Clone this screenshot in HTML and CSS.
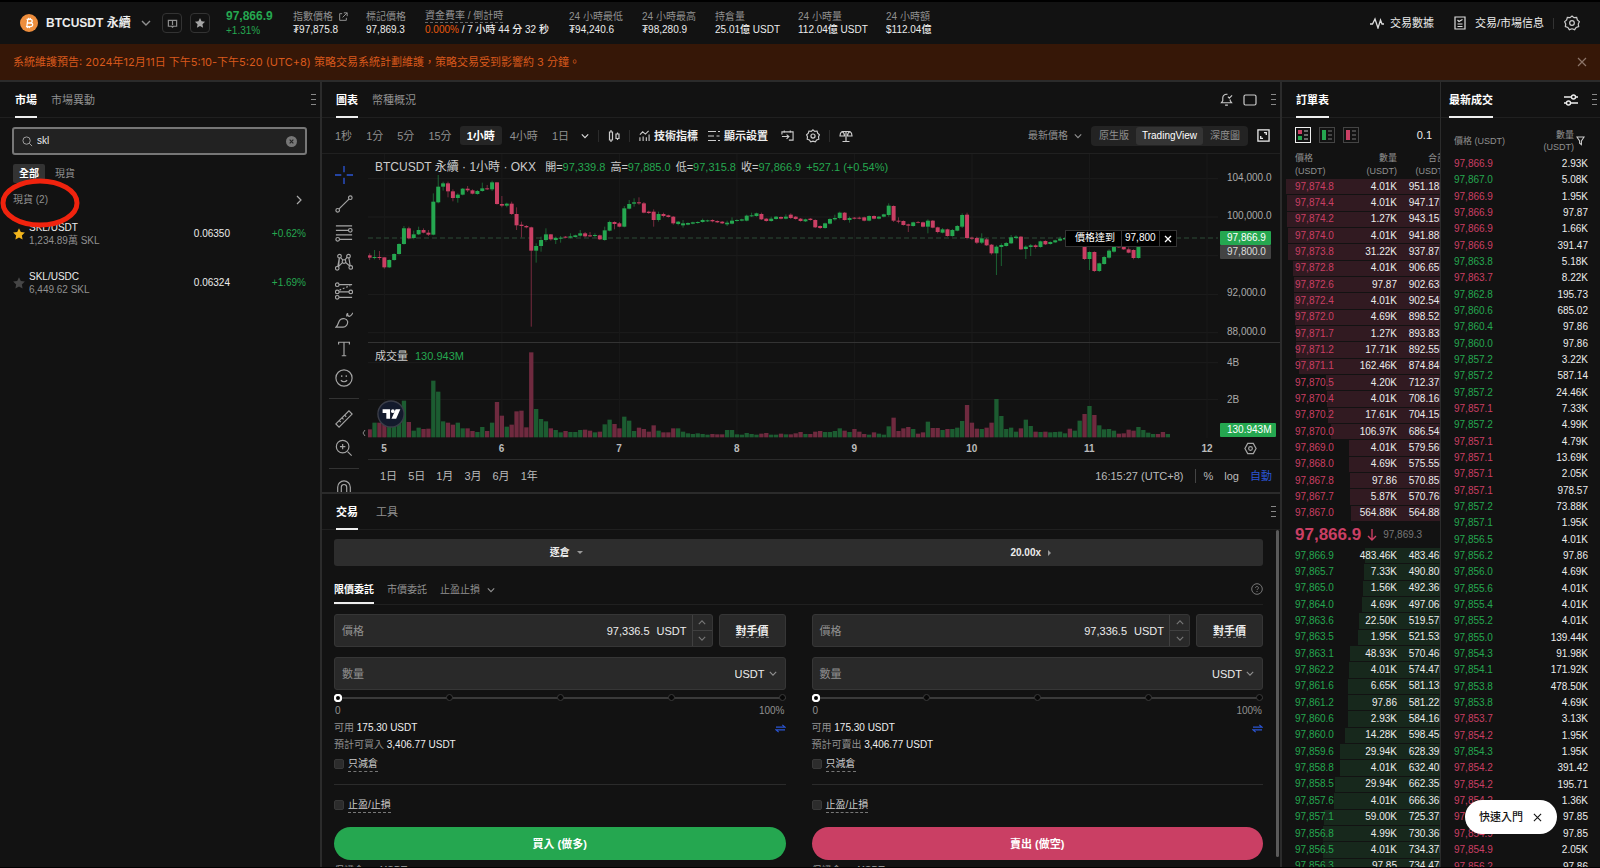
FILE: index.html
```html
<!DOCTYPE html>
<html lang="zh-Hant">
<head>
<meta charset="utf-8">
<title>BTCUSDT 永續</title>
<link rel="stylesheet" href="styles.css">
</head>
<body>
<header class="topbar">
  <div class="pair">
    <svg class="coin" viewBox="0 0 20 20" width="18" height="18"><circle cx="10" cy="10" r="10" fill="#ee8e3d"/><path d="M7.3 6h4c3 0 3 3.8 0 3.8H8.6M8.2 10h3.6c3.2 0 3 4-.2 4H6.6M8.6 6l-1 8M9.6 4.4L9.3 6M11.6 4.4L11.3 6M8.6 14l-.3 1.6M10.6 14l-.3 1.6" fill="none" stroke="#fff" stroke-width="1.4"/></svg>
    <h1 class="pair-name">BTCUSDT 永續</h1>
    <svg class="chev" viewBox="0 0 10 6" width="10" height="6"><path d="M1 1l4 4 4-4"/></svg>
  </div>
  <button class="sq-btn" aria-label="資訊"><svg viewBox="0 0 12 12" width="11" height="11"><path d="M1.500 2.500h9v6.500H7L6 10 5 9H1.500zM6 3v5" fill="none" stroke="#909090" stroke-width="1.300"/></svg></button>
  <button class="sq-btn sq-btn-star" aria-label="收藏"><svg viewBox="0 0 24 24" width="12" height="12"><path fill="#a6a6a6" d="M12 2l3.100 6.600 7 .9-5.200 4.900 1.300 7.100L12 18l-6.200 3.500 1.300-7.100L1.900 9.500l7-.9z"/></svg></button>
  <dl class="stats">
    <div class="stat stat-price"><dt class="up big">97,866.9</dt><dd class="up">+1.31%</dd></div>
    <div class="stat stat-index"><dt>指數價格 <svg viewBox="0 0 12 12" width="10" height="10"><path d="M5 2H2v8h8V7M7 1h4v4M11 1L5.500 6.500" fill="none" stroke="#909090" stroke-width="1.200"/></svg></dt><dd>₮97,875.8</dd></div>
    <div class="stat stat-mark"><dt>標記價格</dt><dd>97,869.3</dd></div>
    <div class="stat stat-fund"><dt><span class="dash">資金費率 / 倒計時</span></dt><dd><span class="orange">0.000%</span> / 7 小時 44 分 32 秒</dd></div>
    <div class="stat stat-day"><dt>24 小時最低</dt><dd>₮94,240.6</dd></div>
    <div class="stat stat-day"><dt>24 小時最高</dt><dd>₮98,280.9</dd></div>
    <div class="stat stat-oi"><dt>持倉量</dt><dd>25.01億 USDT</dd></div>
    <div class="stat stat-vol"><dt>24 小時量</dt><dd>112.04億 USDT</dd></div>
    <div class="stat"><dt>24 小時額</dt><dd>$112.04億</dd></div>
  </dl>
  <nav class="topnav">
    <a href="#data"><svg viewBox="0 0 14 12" width="14" height="12"><path d="M0 7h2.500L5 2l3 9 2.500-8L12 7h2" fill="none" stroke="#ddd" stroke-width="1.300"/></svg>交易數據</a>
    <a href="#info"><svg viewBox="0 0 12 14" width="12" height="14"><path d="M1 1h10v12H1zM3.500 4L5 5.500 8.500 3.500M3.500 8h5M3.500 10.500h5" fill="none" stroke="#ddd" stroke-width="1.200"/></svg>交易/市場信息</a>
    <i class="nav-sep"></i>
    <button class="icon-btn gear-main" aria-label="設置"><svg viewBox="0 0 24 24" width="16" height="16"><path class="ln" d="M12 1.500l3 2.500 4-.5 1 3.800 3 2.700-1.600 3.500.6 4-3.800 1.200L16 22l-4-1.300L8 22l-2.200-3.300L2 17.500l.6-4L1 10l3-2.700 1-3.800 4 .5z"/><circle class="ln" cx="12" cy="12" r="3.500"/></svg></button>
  </nav>
</header>

<div class="notice" role="alert">
  <p>系統維護預告: 2024年12月11日 下午5:10-下午5:20 (UTC+8) 策略交易系統計劃維護，策略交易受到影響約 3 分鐘。</p>
  <button class="icon-btn" aria-label="關閉"><svg viewBox="0 0 10 10" width="10" height="10"><path d="M1 1l8 8M9 1L1 9" stroke="#8c7468" stroke-width="1.200"/></svg></button>
</div>

<main class="desk">
  <aside class="panel market">
    <div class="tabs">
      <button class="tab on">市場</button><button class="tab">市場異動</button>
      <span class="grip grip-edge"></span>
    </div>
    <div class="search">
      <svg viewBox="0 0 12 12" width="11" height="11"><circle cx="5" cy="5" r="4" fill="none" stroke="#aaa"/><path d="M8 8l3 3" stroke="#aaa"/></svg>
      <input type="text" value="skl" aria-label="搜索" spellcheck="false">
      <button class="icon-btn" aria-label="清除"><svg viewBox="0 0 12 12" width="11" height="11"><circle cx="6" cy="6" r="6" fill="#777"/><path d="M4 4l4 4M8 4L4 8" stroke="#222" stroke-width="1.200"/></svg></button>
    </div>
    <div class="chips"><button class="chip on">全部</button><button class="chip">現貨</button></div>
    <a class="group" href="#spot"><span class="group-name">現貨 (2)</span><svg viewBox="0 0 6 10" width="6" height="10"><path d="M1 1l4 4-4 4" fill="none" stroke="#aaa" stroke-width="1.200"/></svg>
      <svg class="ring" viewBox="0 0 80 50" width="80" height="50"><ellipse cx="40" cy="25" rx="37" ry="22" fill="none" stroke="#f0230e" stroke-width="5"/></svg></a>
    <ul class="coins">
      <li><svg class="fav" viewBox="0 0 24 24" width="14" height="14"><path fill="#f2b51d" d="M12 2l3.100 6.600 7 .9-5.200 4.900 1.300 7.100L12 18l-6.200 3.500 1.300-7.100L1.900 9.500l7-.9z"/></svg><div class="coin-id"><b>SKL/USDT</b><span>1,234.89萬 SKL</span></div><span class="coin-px">0.06350</span><span class="coin-chg up">+0.62%</span></li>
      <li><svg class="fav" viewBox="0 0 24 24" width="14" height="14"><path fill="#464646" d="M12 2l3.100 6.600 7 .9-5.200 4.900 1.300 7.100L12 18l-6.200 3.500 1.300-7.100L1.900 9.500l7-.9z"/></svg><div class="coin-id"><b>SKL/USDC</b><span>6,449.62 SKL</span></div><span class="coin-px">0.06324</span><span class="coin-chg up">+1.69%</span></li>
    </ul>
  </aside>

  <div class="center">
    <section class="panel chart">
      <div class="tabs">
        <button class="tab on">圖表</button><button class="tab">幣種概況</button>
        <div class="tab-tools">
          <svg viewBox="0 0 14 14" width="13" height="13"><path class="ln" d="M8 1.500C5 .8 3 3 3 5v3.500L1.500 10.500h11L11 8.500V7M5.500 13h3M8.500 4l1.500 1.500L13 2.500"/></svg>
          <svg viewBox="0 0 14 12" width="14" height="12"><rect class="ln" x="1" y="1" width="12" height="10" rx="1.500"/></svg>
        </div>
        <span class="grip"></span>
      </div>
      <div class="toolbar">
        <div class="frames">
          <button>1秒</button><button>1分</button><button>5分</button><button>15分</button><button class="on">1小時</button><button>4小時</button><button>1日</button>
        </div>
        <svg class="chev bright" viewBox="0 0 10 6" width="8" height="6"><path d="M1 1l4 4 4-4"/></svg>
        <i class="sep"></i>
        <button class="icon-btn" aria-label="K線"><svg viewBox="0 0 12 14" width="12" height="14"><path class="ln" d="M1.500 3h3v8h-3zM3 1v2M3 11v2M8 5h3v4.500H8zM9.500 3.500V5M9.500 9.500V11"/></svg></button>
        <i class="sep"></i>
        <button class="tool"><svg viewBox="0 0 12 12" width="11" height="11"><path class="ln" d="M1 12V8M4.500 12V7M8 12V8M11 12V5M1 5l3-3 3 2.500L10.500 1"/></svg>技術指標</button>
        <button class="tool"><svg viewBox="0 0 12 12" width="12" height="12"><path class="ln" d="M0 1.500h8M0 6h6M0 10.500h8M10 1.500h2M8.500 6h3M10 10.500h2"/></svg>顯示設置</button>
        <button class="icon-btn" aria-label="提醒"><svg viewBox="0 0 14 12" width="13" height="12"><path class="ln" d="M1 4.500V1.500h12v9H8.500M3.500 0v2.500M10 0v2.500M1 6.500h7.500M6 4.500L8.500 6.500 6 9"/></svg></button>
        <button class="icon-btn" aria-label="圖表設置"><svg viewBox="0 0 24 24" width="14" height="14"><path class="ln ln-b" d="M12 1.500l3 2.500 4-.5 1 3.800 3 2.700-1.600 3.500.6 4-3.800 1.200L16 22l-4-1.300L8 22l-2.200-3.300L2 17.500l.6-4L1 10l3-2.700 1-3.800 4 .5z"/><circle class="ln ln-b" cx="12" cy="12" r="3.500"/></svg></button>
        <i class="sep"></i>
        <button class="icon-btn" aria-label="比較"><svg viewBox="0 0 14 14" width="14" height="14"><path class="ln" d="M7 2v10.500M3.500 12.500h7M3 2.500h8M3 2.500C1.500 3.500 1 5 1 7h4.500C5.500 5 5 3.500 3 2.500M11 2.500C9 3.500 8.500 5 8.500 7H13c0-2-.5-3.500-2-4.500"/></svg></button>
        <div class="toolbar-end">
          <button class="price-kind">最新價格<svg class="chev" viewBox="0 0 10 6" width="8" height="6"><path d="M1 1l4 4 4-4"/></svg></button>
          <div class="segment"><button>原生版</button><button class="on">TradingView</button><button>深度圖</button></div>
          <button class="icon-btn" aria-label="全屏"><svg viewBox="0 0 14 14" width="13" height="13"><path class="ln ln-w" d="M1 1h12v12H1zM7.500 4h2.500v2.500M6.500 10H4V7.500"/></svg></button>
        </div>
      </div>

      <div class="chart-main">
        <div class="draw">
          <button aria-label="十字線"><svg viewBox="0 0 20 20"><path d="M10 0v7M10 13v7M0 10h7M13 10h7" stroke="#2b55d4" stroke-width="1.500"/></svg></button>
          <button aria-label="趨勢線"><svg viewBox="0 0 20 20"><circle class="dl" cx="3" cy="17" r="2"/><circle class="dl" cx="17" cy="3" r="2"/><path class="dl" d="M4.500 15.500l11-11"/></svg></button>
          <button aria-label="斐波那契"><svg viewBox="0 0 20 20"><path class="dl" d="M1 2h18M1 7h14M1 12h18M5 17h14"/><circle class="dl" cx="17" cy="7" r="2"/><circle class="dl" cx="3" cy="17" r="2"/></svg></button>
          <button aria-label="形態"><svg viewBox="0 0 20 20"><path class="dl" d="M3 16L5 4l5 5 5-6 2 12-7-6zM5 4l-1 11"/><circle class="dl dot" cx="5" cy="3.500" r="2"/><circle class="dl dot" cx="15" cy="3.500" r="2"/><circle class="dl dot" cx="10" cy="9.500" r="2"/><circle class="dl dot" cx="2.500" cy="17" r="2"/><circle class="dl dot" cx="17.500" cy="16" r="2"/></svg></button>
          <button aria-label="預測"><svg viewBox="0 0 20 20"><path class="dl" d="M4 3h15M4 11h12M4 17h15"/><path class="dl" stroke-dasharray="2 2" d="M5 9l12-5"/><circle class="dl dot" cx="2.500" cy="3" r="2"/><circle class="dl dot" cx="2.500" cy="11" r="2"/><circle class="dl dot" cx="17.500" cy="11" r="2"/><circle class="dl dot" cx="2.500" cy="17" r="2"/></svg></button>
          <button aria-label="筆刷"><svg viewBox="0 0 20 20"><path class="dl" d="M1 18C4 16 3 12 6 9.500c3-2 7-1 8 2 .5 3-2 6.500-5 6.500zM13 6c0-2 0-3 1-3 0 2 1 3 2 3 2 0 3-3 4-4"/></svg></button>
          <button aria-label="文字"><svg viewBox="0 0 20 20"><path class="dl" d="M4 5V2.500h12V5M10 2.500v15M7.500 17.500h5"/></svg></button>
          <button aria-label="表情"><svg viewBox="0 0 20 20"><circle class="dl" cx="10" cy="10" r="9"/><path class="dl" d="M7.500 7v2M12.500 7v2M6.500 12.500c2 2 5 2 7 0"/></svg></button>
          <hr>
          <button aria-label="量尺"><svg viewBox="0 0 20 20"><path class="dl" d="M1 15.500L15.500 1 19 4.500 4.500 19zM5 12l1.500 1.500M8 9l1.500 1.500M11 6l1.500 1.500"/></svg></button>
          <button aria-label="放大"><svg viewBox="0 0 20 20"><circle class="dl" cx="8.500" cy="8.500" r="7"/><path class="dl" d="M14 14l4.500 4.500M8.500 5.500v6M5.500 8.500h6"/></svg></button>
          <hr>
          <button aria-label="磁鐵"><svg viewBox="0 0 20 20"><path class="dl" d="M3 18V8a7 7 0 0 1 14 0v10h-4V8a3 3 0 0 0-6 0v10z"/></svg></button>
        </div>
        <div class="plot">
          <div class="plot-body">
            <svg class="candles" id="candles" viewBox="144 132 2550 852" preserveAspectRatio="none"></svg>
            <div class="scale">
              <span class="s104">104,000.0</span><span class="s100">100,000.0</span><span class="s92">92,000.0</span><span class="s88">88,000.0</span>
              <span class="v4">4B</span><span class="v2">2B</span>
              <span class="tag tag-last">97,866.9</span><span class="tag tag-alert">97,800.0</span><span class="tag tag-vol">130.943M</span>
            </div>
            <div class="pane-line"></div>
            <div class="legend"><span class="legend-name">BTCUSDT 永續 · 1小時 · OKX</span><span>開=<em>97,339.8</em></span><span>高=<em>97,885.0</em></span><span>低=<em>97,315.8</em></span><span>收=<em>97,866.9</em></span><em>+527.1 (+0.54%)</em></div>
            <div class="legend legend-vol"><span>成交量</span><em>130.943M</em></div>
            <div class="alert-tag"><span>價格達到</span><span>97,800</span><button aria-label="移除"><svg viewBox="0 0 8 8" width="8" height="8"><path d="M1 1l6 6M7 1L1 7" stroke="#fff" stroke-width="1.300"/></svg></button></div>
            <svg class="tv" viewBox="0 0 30 30" width="28" height="28"><circle cx="15" cy="15" r="14" fill="#131a2c" stroke="#3a3d48" stroke-width="1.500"/><path fill="#fff" d="M6 10h8v10h-4v-6H6zM20 10h5l-4.500 10h-5z"/><circle cx="17" cy="12" r="2" fill="#fff"/></svg>
            <svg class="fold" viewBox="0 0 4 8" width="4" height="8"><path d="M3 1L1 4l2 3" fill="none" stroke="#888"/></svg>
          </div>
          <div class="time-axis">
            <div class="days"><span>5</span><span>6</span><span>7</span><span>8</span><span>9</span><span>10</span><span>11</span><span>12</span></div>
            <svg class="hex" viewBox="0 0 14 14" width="13" height="13"><path class="dl" d="M4 1.500h6L13 7l-3 5.500H4L1 7z"/><circle class="dl" cx="7" cy="7" r="2"/></svg>
          </div>
          <div class="ranges">
            <button>1日</button><button>5日</button><button>1月</button><button>3月</button><button>6月</button><button>1年</button>
            <span class="clock">16:15:27 (UTC+8)</span><button class="pct">%</button><button>log</button><button class="auto">自動</button>
          </div>
        </div>
      </div>
    </section>

    <section class="panel trade">
      <div class="tabs">
        <button class="tab on">交易</button><button class="tab tab-far">工具</button>
        <span class="grip"></span>
      </div>
      <div class="trade-body">
        <div class="lever"><button>逐倉<i class="tri-d"></i></button><button>20.00x<i class="tri-r"></i></button></div>
        <div class="kinds"><button class="on">限價委託</button><button>市價委託</button><button>止盈止損<svg class="chev" viewBox="0 0 10 6" width="8" height="6"><path d="M1 1l4 4 4-4"/></svg></button>
          <svg class="help" viewBox="0 0 12 12" width="12" height="12"><circle cx="6" cy="6" r="5.300" fill="none" stroke="#777"/><path d="M4.500 5c0-2 3-2 3 0 0 1-1.500 1-1.500 2M6 8v1" fill="none" stroke="#777"/></svg></div>
        <div class="sides" id="sides"></div>
      </div>
      <div class="scrollbar"></div>
    </section>
  </div>

  <aside class="right">
    <section class="panel book">
      <div class="tabs"><button class="tab on">訂單表</button></div>
      <div class="book-tools">
        <button class="on" aria-label="買賣盤"><svg viewBox="0 0 14 14" width="14" height="14"><path fill="#ca3f64" d="M2 2h4v4H2z"/><path fill="#25a750" d="M2 8h4v4H2z"/><path d="M8 3h4M8 7h4M8 11h4" stroke="#888" stroke-width="1.500"/></svg></button>
        <button aria-label="買盤"><svg viewBox="0 0 14 14" width="14" height="14"><path fill="#25a750" d="M2 2h4v10H2z"/><path d="M8 3h4M8 7h4M8 11h4" stroke="#555" stroke-width="1.500"/></svg></button>
        <button aria-label="賣盤"><svg viewBox="0 0 14 14" width="14" height="14"><path fill="#ca3f64" d="M2 2h4v10H2z"/><path d="M8 3h4M8 7h4M8 11h4" stroke="#555" stroke-width="1.500"/></svg></button>
        <span class="tick">0.1</span>
      </div>
      <table class="depth">
        <thead><tr><th>價格<br>(USDT)</th><th>數量<br>(USDT)</th><th>合計<br>(USDT)</th></tr></thead>
      </table>
      <table class="depth asks"><tbody id="asks"></tbody></table>
      <div class="last"><strong>97,866.9</strong><svg viewBox="0 0 10 12" width="10" height="12"><path d="M5 0v11M1 7l4 4 4-4" fill="none" stroke="#ca3f64" stroke-width="1.400"/></svg><span>97,869.3</span></div>
      <table class="depth bids"><tbody id="bids"></tbody></table>
    </section>
    <section class="panel tape">
      <div class="tabs"><button class="tab on">最新成交</button>
        <div class="tab-tools"><svg viewBox="0 0 14 12" width="14" height="12"><path class="ln ln-w" d="M0 3h7.500M11.500 3H14M0 9h2.500M6.500 9H14"/><circle class="ln ln-w" cx="9.500" cy="3" r="2"/><circle class="ln ln-w" cx="4.500" cy="9" r="2"/></svg></div>
        <span class="grip"></span></div>
      <div class="tape-head"><span>價格 (USDT)</span><span class="tape-qty">數量<br>(USDT)</span><svg viewBox="0 0 10 11" width="9" height="10"><path class="ln" d="M1 1h8L6 5.500V9.500L4 8V5.500z"/></svg></div>
      <table class="trades"><tbody id="trades"></tbody></table>
    </section>
  </aside>
</main>
<div class="quick"><button>快速入門</button><button aria-label="關閉"><svg viewBox="0 0 10 10" width="9" height="9"><path d="M1 1l8 8M9 1L1 9" stroke="#111" stroke-width="1.200"/></svg></button></div>
<script src="app.js"></script>
</body>
</html>
```
FILE: styles.css
```css
:root {
  --bg: #121212;
  --line: #2b2b2b;
  --soft: #202020;
  --field: #292929;
  --muted: #909090;
  --text: #ececec;
  --up: #25a750;
  --down: #ca3f64;
}
* { box-sizing: border-box; margin: 0; padding: 0; }
body {
  height: 100vh;
  display: flex;
  flex-direction: column;
  overflow: hidden;
  background: var(--bg);
  border-top: 2px solid #000;
  border-bottom: 1px solid #000;
  color: var(--text);
  font-family: "Liberation Sans", "Noto Sans CJK TC", sans-serif;
  font-size: 10px;
  line-height: 14px;
}
button, input, select { font: inherit; color: inherit; background: none; border: 0; outline: 0; }
button { white-space: nowrap; }
a { color: inherit; text-decoration: none; }
em, i { font-style: normal; }
svg { display: block; flex: none; }
.up { color: var(--up); }
.orange { color: #e8590c; }
.ln { fill: none; stroke: #ccc; stroke-width: 1.2; }
svg .ln-b { stroke-width: 2; }
svg .ln-w { stroke: #eee; stroke-width: 1.4; }
.dl { fill: none; stroke: #a5a5a5; stroke-width: 1.3; }
.dot { fill: var(--bg); }
.chev { fill: none; stroke: var(--muted); stroke-width: 1.4; }
.bright { stroke: #ddd; }
.gear-main .ln { stroke-width: 1.8; }

/* top bar */
.topbar { flex: none; height: 42px; display: flex; align-items: center; padding: 0 20px; }
.pair { display: flex; align-items: center; gap: 8px; width: 142px; }
.pair-name { font-size: 12px; line-height: 16px; white-space: nowrap; margin-right: 2px; }
.sq-btn { width: 20px; height: 20px; border: 1px solid #333; border-radius: 4px; display: grid; place-items: center; }
.sq-btn-star { margin-left: 8px; }
.stats { display: flex; align-items: center; margin-left: 16px; white-space: nowrap; line-height: 13px; }
.stat dt { color: var(--muted); display: flex; align-items: center; gap: 5px; height: 13px; }
.stat dd { font-weight: 500; }
.stat dt.up { color: var(--up); }
.stat dt.big { font-size: 12px; font-weight: 700; height: 15px; }
.stat-price { width: 67px; }
.stat-index { width: 73px; }
.stat-mark { width: 59px; }
.stat-fund { width: 144px; }
.stat-day { width: 73px; }
.stat-oi { width: 83px; }
.stat-vol { width: 88px; }
.dash { line-height: 12px; border-bottom: 1px dashed #666; }
.topnav { margin-left: auto; display: flex; align-items: center; font-size: 11px; }
.topnav a { display: flex; align-items: center; gap: 6px; margin-right: 20px; white-space: nowrap; }
.topnav a + a { gap: 9px; margin-right: 9px; }
.nav-sep { width: 1px; height: 11px; background: #333; margin-right: 10px; }
.icon-btn { display: grid; place-items: center; }

.notice { flex: none; height: 36px; display: flex; align-items: center; justify-content: space-between; padding: 0 13px; background: #361707; color: #d9591c; font-family: Inter, "Noto Sans CJK TC", sans-serif; font-size: 11px; }

/* frame */
.desk {
  flex: 1;
  min-height: 0;
  border-top: 2px solid var(--line);
  display: grid;
  grid-template-columns: 320px minmax(0, 1fr) 318px;
  gap: 2px;
  background: var(--line);
}
.panel { background: var(--bg); overflow: hidden; min-width: 0; }
.center { display: grid; grid-template-rows: auto minmax(0, 1fr); gap: 2px; min-height: 0; min-width: 0; }
.right { display: grid; grid-template-columns: 158px minmax(0, 1fr); gap: 1px; min-height: 0; }
.market, .book, .tape { min-height: 0; }
.tabs { height: 36px; display: flex; align-items: center; gap: 14px; padding: 0 4px 0 15px; border-bottom: 1px solid var(--soft); font-size: 11px; }
.tab { height: 36px; color: var(--muted); border-bottom: 2px solid transparent; padding-top: 2px; }
.tab.on { color: #fff; font-weight: 700; border-bottom-color: #eee; }
.tab-far { margin-left: 4px; }
.grip { width: 5px; height: 12px; margin-left: auto; background: repeating-linear-gradient(#888 0 1px, transparent 1px 5px); }
.tab-tools { margin-left: auto; display: flex; align-items: center; gap: 10px; }
.tab-tools + .grip { margin-left: 0; }

/* market */
.search { margin: 9px 13px 9px 12px; height: 28px; display: flex; align-items: center; gap: 4px; padding: 0 8px; background: #222; border: 2px solid #777; border-radius: 3px; }
.search input { flex: 1; min-width: 0; }
.chips { display: flex; gap: 4px; padding-left: 13px; }
.chip { height: 19px; padding: 0 6px; color: var(--muted); border-radius: 2px; }
.chip.on { background: #333; color: #fff; font-weight: 700; }
.group { position: relative; height: 34px; display: flex; align-items: center; justify-content: space-between; padding: 0 18px 0 13px; color: var(--muted); }
.ring { position: absolute; left: 0; top: -5px; }
.coins { list-style: none; padding: 0 14px 0 12px; margin-top: -8px; }
.coins li { height: 49px; display: flex; align-items: center; }
.coin-id { margin-left: 3px; display: grid; line-height: 13px; width: 120px; }
.coin-id span { color: var(--muted); }
.coin-id b { font-weight: 500; }
.coin-px { width: 81px; text-align: right; }
.coin-chg { margin-left: auto; }

/* chart */
.chart .tabs, .trade .tabs { padding-left: 14px; }
.toolbar { height: 36px; display: flex; align-items: center; padding: 0 10px 0 6px; border-bottom: 1px solid var(--soft); font-size: 11px; }
.frames { display: flex; color: var(--muted); }
.frames button { padding: 0 7px; height: 19px; }
.frames .on { background: #252525; color: #fff; font-weight: 700; border-radius: 3px; margin: 0 1px; }
.frames + .chev { margin-left: 5px; }
.sep { width: 1px; height: 12px; background: var(--line); margin: 0 9px; }
.tool { display: flex; align-items: center; gap: 4px; font-weight: 700; margin-right: 10px; }
.tool + .icon-btn { margin: 0 12px 0 3px; }
.toolbar-end { margin-left: auto; display: flex; align-items: center; gap: 9px; color: var(--muted); font-size: 10px; }
.price-kind { display: flex; align-items: center; gap: 6px; }
.segment { display: flex; background: #232323; border-radius: 4px; padding: 1px; }
.segment button { height: 18px; padding: 0 7px; }
.segment .on { background: #343434; color: #fff; border-radius: 3px; padding: 0 6px; }
.chart-main { display: flex; height: 338px; }
.draw { width: 46px; flex: none; overflow: hidden; display: flex; flex-direction: column; padding: 6px 9px 0 7px; }
.draw button { height: 29px; flex: none; display: grid; place-items: center; }
.draw svg { width: 18px; height: 18px; }
.draw hr { border: 0; height: 1px; background: #333; margin: 6px 0 5px; flex: none; }
.plot { flex: 1; min-width: 0; display: flex; flex-direction: column; }
.plot-body { position: relative; height: 284px; display: flex; }
.candles { flex: 1; min-width: 0; width: 0; height: 284px; }
.scale { position: relative; width: 62px; flex: none; color: #aaa; }
.scale span { position: absolute; left: 9px; }
.s104 { top: 17px; }
.s100 { top: 55px; }
.s92 { top: 132px; }
.s88 { top: 171px; }
.v4 { top: 202px; }
.v2 { top: 239px; }
.scale .tag { left: 2px; padding: 0 4px 0 7px; background: var(--up); color: #fff; border-radius: 1px; width: 51px; }
.scale .tag-last { top: 77px; }
.scale .tag-alert { top: 91px; background: #434343; color: #ddd; }
.scale .tag-vol { top: 269px; width: 56px; }
.pane-line { position: absolute; left: 0; right: 0; top: 188px; height: 1px; background: #333; }
.legend { position: absolute; left: 7px; top: 5px; display: flex; align-items: center; gap: 5px; font-size: 11px; line-height: 16px; color: #ccc; white-space: nowrap; }
.legend em { color: var(--up); }
.legend-name { font-size: 12px; margin-right: 4px; }
.legend-vol { top: 194px; gap: 7px; }
.alert-tag { position: absolute; left: 697px; top: 76px; height: 17px; display: flex; background: #000; border: 1px solid #333; color: #fff; }
.alert-tag span { padding: 0 3px; border-right: 1px solid #333; }
.alert-tag span:first-child { padding: 0 6px 0 9px; }
.alert-tag button { width: 16px; display: grid; place-items: center; }
.tv { position: absolute; left: 9px; top: 246px; }
.fold { position: absolute; left: -6px; top: 275px; }
.time-axis { height: 22px; display: flex; align-items: center; border-bottom: 1px solid var(--line); }
.days { flex: 1; display: flex; justify-content: space-between; padding: 0 1px 0 6px; color: #bbb; font-weight: 700; }
.days span { width: 20px; text-align: center; }
.hex { margin: 0 23px 0 26px; }
.ranges { flex: 1; display: flex; align-items: center; gap: 11px; padding: 0 8px 0 12px; font-size: 11px; color: #bbb; }
.clock { margin-left: auto; }
.pct { border-left: 1px solid #444; padding-left: 8px; }
.auto { color: #2b55d4; }

/* order entry */
.trade { position: relative; min-height: 0; }
.trade-body { padding: 9px 17px 0 12px; }
.lever { display: grid; grid-template-columns: 1fr 1fr; height: 27px; background: #2d2d2d; border-radius: 3px; }
.lever button { font-weight: 700; display: flex; align-items: center; justify-content: center; gap: 7px; }
.tri-d { border: 3px solid transparent; border-top: 3px solid #999; border-bottom: 0; }
.tri-r { border: 3px solid transparent; border-left: 3px solid #999; border-right: 0; }
.kinds { display: flex; gap: 13px; height: 27px; margin-top: 12px; border-bottom: 1px solid var(--soft); color: var(--muted); }
.kinds button { height: 26px; border-bottom: 2px solid transparent; display: flex; align-items: center; gap: 7px; }
.kinds .on { color: #fff; font-weight: 700; border-bottom-color: #eee; }
.help { margin: 5px 0 0 auto; }
.sides { display: grid; grid-template-columns: 1fr 1fr; gap: 26px; margin-top: 9px; }
.price-row { display: grid; grid-template-columns: minmax(0, 1fr) 67px; gap: 6px; }
.field { height: 33px; display: flex; align-items: center; background: var(--field); border: 1px solid #363636; border-radius: 3px; padding-left: 7px; font-size: 11px; }
.field label { color: var(--muted); }
.field input { flex: 1; min-width: 0; text-align: right; margin-right: 7px; }
.steps { margin-left: 5px; width: 20px; height: 31px; display: grid; border-left: 1px solid #404040; }
.steps button { display: grid; place-items: center; }
.steps button + button { border-top: 1px solid #404040; }
.steps .chev { stroke: #777; }
.bbo { background: var(--field); border: 1px solid #363636; border-radius: 3px; font-size: 11px; font-weight: 700; }
.under { border-bottom: 1px dashed #777; }
.amount { margin-top: 10px; padding-right: 8px; }
.amount select { appearance: none; width: 34px; }
.slide { position: relative; height: 15px; display: flex; align-items: center; }
.slide input { appearance: none; width: 100%; height: 2px; background: #3a3a3a; margin: 0; }
.slide input::-webkit-slider-thumb { appearance: none; position: relative; z-index: 1; width: 8px; height: 8px; border: 2px solid #fff; border-radius: 50%; background: #000; }
.stops { position: absolute; inset: 0; display: flex; align-items: center; justify-content: space-between; pointer-events: none; }
.stops i { width: 7px; height: 7px; border-radius: 50%; background: #080808; border: 1px solid #3a3a3a; }
.stops i:first-child { width: 8px; height: 8px; border: 2px solid #fff; }
.marks { display: flex; justify-content: space-between; line-height: 12px; color: var(--muted); padding: 0 1px; }
.info { margin-top: 3px; display: flex; justify-content: space-between; align-items: center; color: var(--muted); }
.info b { font-weight: 500; color: #eee; }
.marks + .info { margin-top: 4px; }
.check { display: flex; align-items: center; gap: 4px; height: 14px; color: #ccc; }
.check input { appearance: none; width: 10px; height: 10px; background: #2c2c2c; border: 1px solid #383838; border-radius: 2px; }
.check span { border-bottom: 1px dashed #777; }
.info + .check { margin-top: 5px; }
.rule { border: 0; height: 1px; background: var(--line); margin: 13px 0; }
.submit { display: block; width: 100%; height: 33px; margin: 15px 0 4px; border-radius: 17px; font-size: 11px; font-weight: 700; color: #fff; }
.buy { background: var(--up); }
.sell { background: var(--down); }
.margin { display: flex; gap: 16px; color: var(--muted); }
.scrollbar { position: absolute; right: 1px; top: 36px; bottom: 10px; width: 3px; border-radius: 2px; background: #5a5a5a; }

/* order book */
.book .tabs { padding-left: 14px; }
.book-tools { height: 33px; display: flex; align-items: center; gap: 8px; padding-left: 13px; }
.book-tools button { width: 16px; height: 16px; border: 1px solid #444; }
.book-tools .on { border-color: #eee; }
.tick { margin-left: auto; margin-right: 8px; font-size: 11px; }
.depth { width: 164px; table-layout: fixed; border-spacing: 0; text-align: right; }
.depth th { font-size: 9px; font-weight: 400; line-height: 13px; color: var(--muted); padding: 1px 0; }
.depth td { border-bottom: 1px solid var(--bg); }
.depth th:first-child, .depth td:first-child { width: 66px; padding-left: 13px; text-align: left; }
.depth th:nth-child(2), .depth td:nth-child(2) { width: 49px; }
.asks { height: 343px; }
.bids { height: 327px; }
.asks tr { background: linear-gradient(to left, #311a21 var(--d), transparent var(--d)); }
.bids tr { background: linear-gradient(to left, #17281c var(--d), transparent var(--d)); }
.asks td:first-child, .down { color: var(--down); }
.bids td:first-child { color: var(--up); }
.last { height: 26px; display: flex; align-items: center; gap: 6px; padding-left: 13px; color: #777; }
.last strong { font-size: 17px; color: var(--down); }

/* trades */
.tape .tabs { padding: 0 3px 0 8px; }
.tape-head { height: 38px; display: flex; align-items: center; padding: 8px 15px 0 13px; gap: 2px; font-size: 9px; line-height: 12px; color: var(--muted); }
.tape-qty { margin-left: auto; text-align: right; }
.trades { width: 100%; height: 719px; border-spacing: 0; }
.trades td:first-child { padding-left: 13px; }
.trades td:last-child { padding-right: 12px; text-align: right; }

.quick { position: fixed; right: 43px; bottom: 34px; height: 34px; display: flex; align-items: center; gap: 10px; padding: 0 15px 0 14px; border-radius: 17px; background: #fff; color: #111; font-size: 11px; font-weight: 500; }
```
FILE: app.js
```js
// side, body top, body bottom, wick top, wick bottom, volume top (pane units)
const candles = `r436,443,430,450,958 g441,444,420,448,938 r441,444,423,450,938 r442,472,442,476,938 g450,472,448,474,945 g432,450,430,452,940 g402,432,400,434,935 g355,402,348,404,872 r355,385,350,388,936 g373,384,362,388,962
g360,373,350,375,953 r360,368,355,370,957 r368,374,360,378,956 g275,374,250,376,812 g230,277,195,280,845 g220,230,215,242,934 r220,244,215,262,938 r244,264,238,274,944 g254,264,250,278,938 g236,254,234,256,955
r236,241,228,246,955 r241,251,238,253,963 g243,252,240,254,966 g235,243,218,245,951 r235,238,225,240,963 g217,238,212,243,938 r217,282,217,284,876 r282,287,258,292,917 g281,287,278,292,950 r281,312,275,315,944
r312,346,292,360,904 r344,348,335,382,902 r348,352,345,355,952 r352,422,350,650,727 g408,422,400,458,897 g390,408,380,425,927 g373,390,355,395,934 r373,388,372,392,955 g384,390,380,402,960 g383,386,378,398,967
r380,383,378,385,963 g379,383,370,385,966 g376,381,374,383,966 g370,377,360,380,960 r370,379,366,382,959 r376,379,366,381,962 g375,378,370,382,967 r376,388,374,390,965 g361,390,350,392,943 g336,362,332,364,929
r336,342,334,358,942 r340,350,336,352,955 g295,350,288,352,920 g282,296,270,298,932 g277,281,265,290,963 r277,280,262,284,953 r280,308,276,310,957 r305,309,302,312,965 r305,330,298,350,946 g312,330,305,335,962
r312,318,308,322,967 r316,321,314,323,967 r320,340,318,344,955 g335,342,333,346,955 g340,346,330,353,965 g339,344,337,346,970 g337,341,335,343,972 g336,339,334,341,970 g330,336,326,338,972 g331,334,329,336,974
r330,334,328,337,972 r333,337,331,339,973 r335,340,333,342,973 g338,343,332,348,960 g332,341,322,343,960 g330,333,328,335,973 g328,332,326,334,974 g317,332,314,334,969 g316,319,308,321,972 g310,318,308,320,974
r312,328,308,330,971 r326,333,324,335,969 g326,333,320,335,974 g320,327,318,329,974 r321,326,319,328,971 g320,326,313,328,973 r314,324,310,327,973 r320,327,318,329,970 r326,333,324,335,966 g328,334,326,336,972
r326,330,324,332,972 r330,352,328,354,965 r348,354,346,357,963 g340,354,338,356,966 g327,341,325,343,966 g324,328,314,332,963 g308,324,305,328,955 r308,330,306,332,962 g324,330,320,338,966 r323,326,321,328,957
r323,326,320,328,965 r322,332,320,334,972 g318,332,316,334,974 r318,326,316,328,967 g320,326,318,328,971 g313,320,311,322,974 g287,315,280,320,949 r288,332,286,336,923 r332,335,322,340,963 r333,345,331,347,955
r343,347,341,366,951 g337,348,335,350,957 r336,338,333,340,971 r337,350,335,352,967 g332,350,328,370,935 r332,353,330,355,954 r352,366,350,370,954 g358,368,354,370,960 r358,378,356,380,957 g360,378,357,380,957
g348,362,345,364,953 g315,350,310,354,933 r314,384,308,388,885 r383,386,380,390,938 r384,398,380,402,956 g385,398,370,402,957 r388,406,384,408,953 r404,430,402,434,938 g410,430,406,495,867 g405,411,400,468,918
g399,408,396,410,957 g382,400,375,402,953 g380,384,376,388,965 r380,418,378,420,955 g410,417,406,447,929 g406,411,402,438,948 r406,411,403,416,965 g394,411,392,413,966 r393,403,391,405,965 g396,402,394,404,967
g391,397,389,399,966 g386,392,380,394,965 g384,388,382,390,970 r384,392,382,394,956 g386,392,384,394,962 g384,390,382,392,932 r408,447,406,450,912 g426,447,424,480,888 r426,483,424,486,915 g460,483,458,486,946
g441,462,438,464,958 g422,443,418,446,957 g410,425,408,428,962 r404,412,402,414,971 r410,418,408,420,970 r418,428,412,430,959 r420,444,418,448,962 g408,444,406,446,951 g0,0,0,0,960 g0,0,0,0,968 g0,0,0,0,972 r0,0,0,0,972 r0,0,0,0,966 g0,0,0,0,972`.split(/\s+/);

const step = 14.69, left = 149, base = 982;
let art = '';
for (const y of [206, 321, 437, 553, 668, 758, 868]) art += `<path d="M144 ${y}H2694" stroke="#1d1d1d" stroke-width="3"/>`;
for (let d = 0; d < 8; d++) art += `<path d="M${193 + d * 352.6} 132V984" stroke="#1a1a1a" stroke-width="3"/>`;
art += '<path d="M144 384H2694" stroke="#2c4b37" stroke-width="3" stroke-dasharray="15 9"/>';
candles.forEach((c, i) => {
  const [a, b, hi, lo, vol] = c.slice(1).split(',').map(Number);
  const red = c[0] === 'r', x = left + i * step;
  art += `<path fill="${red ? '#6f2a3f' : '#1c5c31'}" d="M${x - 6.5} ${vol}h13V${base}h-13z"/>`;
  if (b) {
    const tone = red ? '#ca3f64' : '#25a750';
    art += `<path stroke="${tone}" stroke-opacity=".65" stroke-width="2.500" d="M${x} ${hi}V${lo}"/><path fill="${tone}" d="M${x - 6} ${a}h12V${b}h-12z"/>`;
  }
});
document.getElementById('candles').innerHTML = art;

const asks = `97,874.8 4.01K 951.18K|97,874.4 4.01K 947.17K|97,874.2 1.27K 943.15K|97,874.0 4.01K 941.88K|97,873.8 31.22K 937.87K|97,872.8 4.01K 906.65K|97,872.6 97.87 902.63K|97,872.4 4.01K 902.54K|97,872.0 4.69K 898.52K|97,871.7 1.27K 893.83K|97,871.2 17.71K 892.55K|97,871.1 162.46K 874.84K|97,870.5 4.20K 712.37K|97,870.4 4.01K 708.16K|97,870.2 17.61K 704.15K|97,870.0 106.97K 686.54K|97,869.0 4.01K 579.56K|97,868.0 4.69K 575.55K|97,867.8 97.86 570.85K|97,867.7 5.87K 570.76K|97,867.0 564.88K 564.88K`;
const bids = `97,866.9 483.46K 483.46K|97,865.7 7.33K 490.80K|97,865.0 1.56K 492.36K|97,864.0 4.69K 497.06K|97,863.6 22.50K 519.57K|97,863.5 1.95K 521.53K|97,863.1 48.93K 570.46K|97,862.2 4.01K 574.47K|97,861.6 6.65K 581.13K|97,861.2 97.86 581.22K|97,860.6 2.93K 584.16K|97,860.0 14.28K 598.45K|97,859.6 29.94K 628.39K|97,858.8 4.01K 632.40K|97,858.5 29.94K 662.35K|97,857.6 4.01K 666.36K|97,857.1 59.00K 725.37K|97,856.8 4.99K 730.36K|97,856.5 4.01K 734.37K|97,856.3 97.85 734.47K`;
const depthRows = s => s.split('|').map(r => {
  const c = r.split(' ');
  return `<tr style="--d:${(parseFloat(c[2]) / 9.75).toFixed(1)}%"><td>${c.join('</td><td>')}</td></tr>`;
}).join('');
document.getElementById('asks').innerHTML = depthRows(asks);
document.getElementById('bids').innerHTML = depthRows(bids);

const trades = `r66.9 2.93K|g67.0 5.08K|r66.9 1.95K|r66.9 97.87|r66.9 1.66K|r66.9 391.47|g63.8 5.18K|r63.7 8.22K|g62.8 195.73|g60.6 685.02|g60.4 97.86|g60.0 97.86|g57.2 3.22K|g57.2 587.14|g57.2 24.46K|r57.1 7.33K|g57.2 4.99K|r57.1 4.79K|r57.1 13.69K|r57.1 2.05K|r57.1 978.57|g57.2 73.88K|g57.1 1.95K|g56.5 4.01K|g56.2 97.86|g56.0 4.69K|g55.6 4.01K|g55.4 4.01K|g55.2 4.01K|g55.0 139.44K|g54.3 91.98K|g54.1 171.92K|g53.8 478.50K|g53.8 4.69K|r53.7 3.13K|r54.2 1.95K|g54.3 1.95K|r54.2 391.42|r54.2 195.71|r54.2 1.36K|r54.9 97.85|r54.9 97.85|r54.9 2.05K|r56.2 97.86`;
document.getElementById('trades').innerHTML = trades.split('|').map(t => {
  const [p, q] = t.slice(1).split(' ');
  return `<tr><td class="${t[0] === 'r' ? 'down' : 'up'}">97,8${p}</td><td>${q}</td></tr>`;
}).join('');

const side = (id, can, cls, label) => `<form class="side">
  <div class="price-row">
    <div class="field"><label for="${id}-px">價格</label><input id="${id}-px" type="text" value="97,336.5"><span>USDT</span>
      <div class="steps"><button type="button" aria-label="加"><svg class="chev" viewBox="0 0 10 6" width="8" height="5"><path d="M1 5l4-4 4 4"/></svg></button><button type="button" aria-label="減"><svg class="chev" viewBox="0 0 10 6" width="8" height="5"><path d="M1 1l4 4 4-4"/></svg></button></div></div>
    <button type="button" class="bbo"><span class="under">對手價</span></button>
  </div>
  <div class="field amount"><label for="${id}-qty">數量</label><input id="${id}-qty" type="text"><select aria-label="單位"><option>USDT</option></select><svg class="chev" viewBox="0 0 10 6" width="8" height="5"><path d="M1 1l4 4 4-4"/></svg></div>
  <div class="slide"><input type="range" min="0" max="100" value="0" aria-label="比例"><div class="stops"><i></i><i></i><i></i><i></i><i></i></div></div>
  <div class="marks"><span>0</span><span>100%</span></div>
  <div class="info"><span>可用 <b>175.30 USDT</b></span><svg viewBox="0 0 12 10" width="11" height="9"><path d="M1 3.500h10L8 1M11 6.500H1L4 9" fill="none" stroke="#2b55d4" stroke-width="1.300"/></svg></div>
  <div class="info"><span>${can} <b>3,406.77 USDT</b></span></div>
  <label class="check"><input type="checkbox"><span>只減倉</span></label>
  <hr class="rule">
  <label class="check"><input type="checkbox"><span>止盈/止損</span></label>
  <button type="button" class="submit ${cls}">${label}</button>
  <div class="margin"><span>保證金</span><b>USDT</b></div>
</form>`;
document.getElementById('sides').innerHTML = side('buy', '預計可買入', 'buy', '買入 (做多)') + side('sell', '預計可賣出', 'sell', '賣出 (做空)');
```
